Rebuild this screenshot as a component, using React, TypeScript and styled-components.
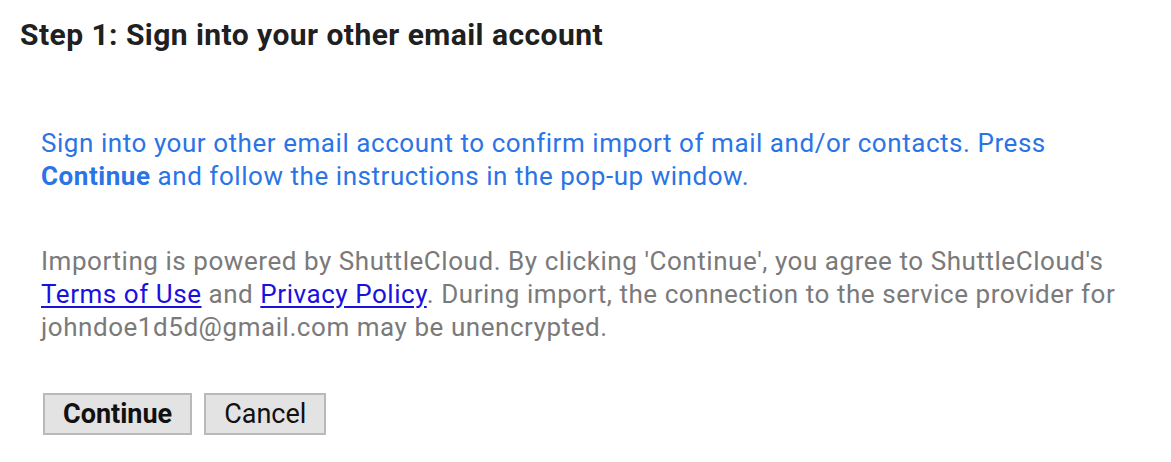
import React from "react";
import styled, { createGlobalStyle } from "styled-components";

const GlobalStyle = createGlobalStyle`
	html, body {
		margin: 0;
		padding: 0;
		background: #fff;
	}
	body {
		font-family: Roboto, "Liberation Sans", Arial, sans-serif;
	}
`;

const Page = styled.main`
	padding: 17px 20px 0 20px;
`;

const Heading = styled.h2`
	margin: 0;
	font-size: 30px;
	line-height: 36px;
	font-weight: 700;
	letter-spacing: 0.45px;
	color: #202020;
`;

const Body = styled.section`
	padding: 74px 0 0 21px;
	display: flex;
	flex-direction: column;
	gap: 52px;
`;

const Para = styled.p<{ $tone: "blue" | "gray" }>`
	margin: 0;
	font-size: 26px;
	line-height: 33px;
	letter-spacing: 0.55px;
	color: ${(p) => (p.$tone === "blue" ? "#2a74e6" : "#7a7a7a")};

	strong {
		font-weight: 700;
	}
`;

const Link = styled.a`
	color: #1a10e0;
	text-decoration: underline;
	text-underline-offset: 3px;
`;

const Actions = styled.div`
	display: flex;
	gap: 12px;
	margin-top: -3px;
	padding-left: 2px;
`;

const Button = styled.button<{ $primary?: boolean }>`
	font-family: Roboto, "Liberation Sans", Arial, sans-serif;
	font-size: 27px;
	font-weight: ${(p) => (p.$primary ? 700 : 400)};
	color: #111;
	background: #e3e3e3;
	border: 2px solid #b9b9b9;
	border-radius: 0;
	height: 42px;
	padding: 0 18px;
	cursor: pointer;
`;

export default function App() {
	return (
		<>
			<GlobalStyle />
			<Page>
				<Heading>Step 1: Sign into your other email account</Heading>
				<Body>
					<Para $tone="blue">
						Sign into your other email account to confirm import of mail and/or contacts. Press
						<br />
						<strong>Continue</strong> and follow the instructions in the pop-up window.
					</Para>
					<Para $tone="gray">
						Importing is powered by ShuttleCloud. By clicking 'Continue', you agree to ShuttleCloud's
						<br />
						<Link href="#">Terms of Use</Link> and <Link href="#">Privacy Policy</Link>. During import, the connection to the service provider for
						<br />
						johndoe1d5d@gmail.com may be unencrypted.
					</Para>
					<Actions>
						<Button $primary>Continue</Button>
						<Button>Cancel</Button>
					</Actions>
				</Body>
			</Page>
		</>
	);
}
